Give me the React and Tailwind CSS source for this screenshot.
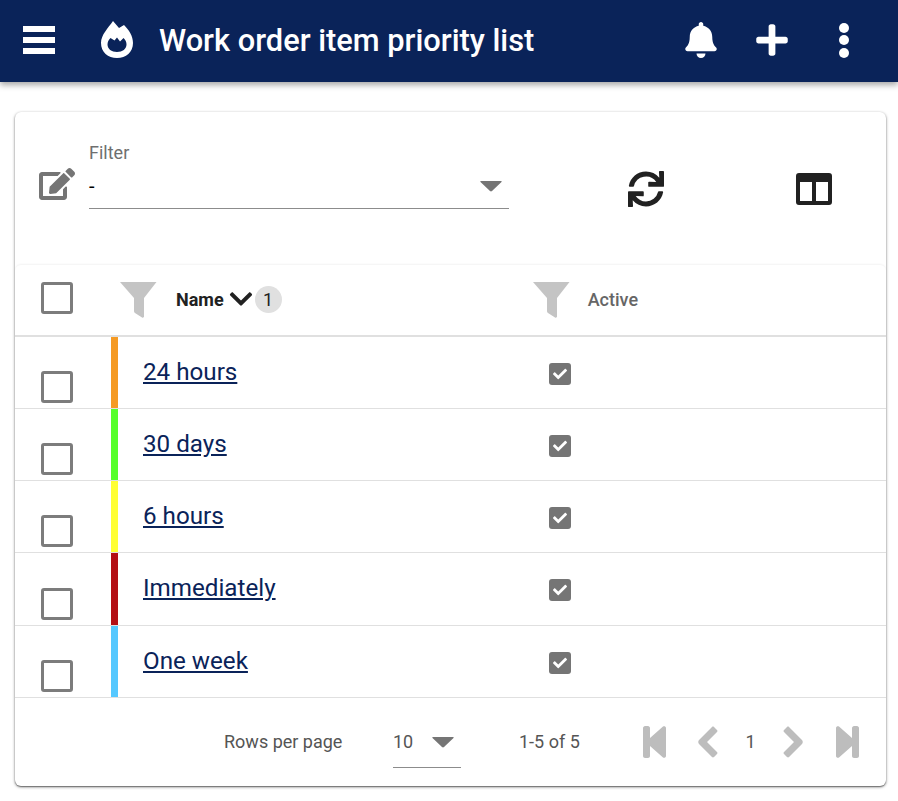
import { FaBell, FaPlus, FaEdit, FaSync, FaChevronDown, FaCheck } from "react-icons/fa";

const rows = [
  { name: "24 hours", color: "bg-[#f59a23]", height: "h-[72px]" },
  { name: "30 days", color: "bg-[#55ff2a]", height: "h-[72px]" },
  { name: "6 hours", color: "bg-[#ffff33]", height: "h-[72px]" },
  { name: "Immediately", color: "bg-[#b30f14]", height: "h-[73px]" },
  { name: "One week", color: "bg-[#55c8ff]", height: "h-[72px]" },
];

// Funnel drawn by hand, the icon packages only have symmetric ones
function Funnel() {
  return (
    <svg width="38" height="38" viewBox="0 0 38 38" className="text-[#c4c4c4]">
      <path d="M1 1h36.500L25 17v18.500c0 1-1 1.500-2 1l-7-4.500c-.6-.4-1-1-1-1.800V17z" fill="currentColor" />
    </svg>
  );
}

function Flame() {
  return (
    <svg width="34" height="38" viewBox="0 0 34 38">
      <path
        fillRule="evenodd"
        fill="#fff"
        d="M13 0l6 7 5-3c5 5 9 11 9 18 0 9-7 15-16 15S1 31 1 22C1 14 8 7 13 0zM10.500 17C8.500 19 7.500 21 7.500 23.500c0 4.500 4 7.500 9.500 7.500s9.500-3 9.500-7.500c0-2.500-1-4.500-3-6.500l-3.500 3.500-3-4-2.500 3z"
      />
    </svg>
  );
}

function Dropdown() {
  return (
    <svg width="22" height="12" viewBox="0 0 22 12">
      <path d="M1 1h20c.6 0 .8.500.5 1L12 11c-.5.500-1.500.500-2 0L.5 2C.2 1.500.4 1 1 1z" fill="#757575" />
    </svg>
  );
}

function Box({ className = "" }) {
  return <div className={`w-8 h-8 rounded-[3px] border-[3px] border-[#7c7c7c] bg-white ${className}`} />;
}

function PagerIcon({ d }) {
  return (
    <svg width="24" height="32" viewBox="0 0 24 32">
      <path d={d} fill="#bdbdbd" />
    </svg>
  );
}

export default function App() {
  return (
    <div className="w-[898px] h-[801px] bg-white overflow-hidden font-['Roboto',sans-serif]">
      {/* Top bar */}
      <header className="h-[82px] bg-[#0a2359] flex items-center shadow-[0_3px_6px_rgba(0,0,0,0.35)] relative z-10">
        <div className="ml-[23px] mb-[2px] w-8 flex flex-col gap-[5px]">
          <div className="h-[6px] bg-white" />
          <div className="h-[6px] bg-white" />
          <div className="h-[6px] bg-white" />
        </div>
        <div className="ml-[45px] mb-[2px]">
          <Flame />
        </div>
        <h1 className="ml-[25px] text-white text-[30.800px] font-medium leading-none">
          Work order item priority list
        </h1>
        <div className="ml-auto mb-[2px] flex items-center">
          <FaBell className="text-white" size={36} />
          <FaPlus className="text-white ml-[35px]" size={36} />
          <div className="ml-[49px] mr-[49px] flex flex-col gap-[2.500px]">
            <div className="w-[10px] h-[10px] rounded-full bg-white" />
            <div className="w-[10px] h-[10px] rounded-full bg-white" />
            <div className="w-[10px] h-[10px] rounded-full bg-white" />
          </div>
        </div>
      </header>

      {/* Card */}
      <main className="mx-[15px] mt-[30px] w-[871px] h-[674px] bg-white rounded-md shadow-[0_1px_3px_rgba(0,0,0,0.5),0_1px_1px_rgba(0,0,0,0.3)] flex flex-col">
        {/* Filter bar */}
        <div className="h-[153px] flex items-start">
          <FaEdit size={36} className="ml-[24px] mt-[54px] text-[#757575]" />
          <div className="ml-[14px] mt-[31px] w-[420px] h-[66px] border-b border-[#8c8c8c] flex flex-col">
            <span className="text-[18px] leading-[20px] text-[#6f6f6f]">Filter</span>
            <div className="flex items-center justify-between mt-[11px]">
              <span className="text-[20px] leading-[24px] text-black">-</span>
              <div className="mr-[7px]">
                <Dropdown />
              </div>
            </div>
          </div>
          <FaSync size={36} className="ml-[119px] mt-[59px] text-[#212121]" />
          <svg width="36" height="32" viewBox="0 0 36 32" className="ml-[132px] mt-[61px]">
            <path
              fillRule="evenodd"
              fill="#212121"
              d="M3 0h30a3 3 0 0 1 3 3v26a3 3 0 0 1-3 3H3a3 3 0 0 1-3-3V3a3 3 0 0 1 3-3zM4 9v19h12V9zm16 0v19h12V9z"
            />
          </svg>
        </div>

        {/* Table */}
        <div className="flex-1 flex flex-col rounded-t-md shadow-[0_-1px_2px_rgba(0,0,0,0.05)]">
          <div className="h-[72px] flex items-center border-b-2 border-[#e0e0e0]">
            <Box className="ml-[26px] mb-[4px]" />
            <div className="ml-[46px]">
              <Funnel />
            </div>
            <span className="ml-[19px] mb-[2px] text-[18px] font-bold text-[#212121]">Name</span>
            <FaChevronDown size={26} className="ml-[4px] mb-[2px] text-[#212121]" />
            <span className="ml-[1px] mb-[2px] w-[27px] h-[27px] rounded-full bg-[#e0e0e0] text-[18px] text-[#212121] flex items-center justify-center">
              1
            </span>
            <div className="ml-[250px]">
              <Funnel />
            </div>
            <span className="ml-[18px] mb-[2px] text-[18px] font-medium text-[#666666]">Active</span>
          </div>

          {rows.map((row) => (
            <div key={row.name} className={`${row.height} flex border-b border-[#e0e0e0]`}>
              <div className="w-[96px] flex items-end pb-[5px]">
                <Box className="ml-[26px]" />
              </div>
              <div className={`w-[7px] ${row.color}`} />
              <div className="w-[431px] pl-[25px] pt-[19px]">
                <a href="#" className="text-[24.200px] leading-[32px] text-[#0a2359] underline">
                  {row.name}
                </a>
              </div>
              <div className="pt-[26px]">
                <div className="w-[22px] h-[22px] rounded-[3px] bg-[#757575] flex items-center justify-center">
                  <FaCheck size={14} className="text-white" />
                </div>
              </div>
            </div>
          ))}

          {/* Pagination */}
          <div className="flex-1 flex items-center text-[#555555] text-[18px]">
            <span className="ml-[209px] mb-[2px] w-[118px] whitespace-nowrap">Rows per page</span>
            <div className="ml-[51px] w-[68px] h-[50px] mt-[2px] pb-[2px] border-b border-[#8c8c8c] flex items-center">
              <span>10</span>
              <div className="ml-[19px]">
                <Dropdown />
              </div>
            </div>
            <span className="ml-[58px] mb-[2px] w-[60px] whitespace-nowrap">1-5 of 5</span>
            <div className="ml-[64px]">
              <PagerIcon d="M2 0h3c1 0 2 1 2 2v10L20 .500c1-.800 3-.200 3 1.500v28c0 1.700-2 2.300-3 1.500L7 20v10c0 1-1 2-2 2H2c-1 0-2-1-2-2V2C0 1 1 0 2 0z" />
            </div>
            <div className="ml-[30px]">
              <PagerIcon d="M17 1l3 3c.6.600.6 1.500 0 2L10 16l10 10c.6.500.6 1.400 0 2l-3 3c-.6.600-1.500.600-2 0L2 18c-1-1-1-3 0-4L15 1c.5-.6 1.400-.6 2 0z" />
            </div>
            <span className="w-[59px] mb-[2px] text-center text-[#555555]">1</span>
            <div>
              <PagerIcon d="M7 1L4 4c-.6.600-.6 1.500 0 2l10 10L4 26c-.6.500-.6 1.400 0 2l3 3c.6.600 1.500.600 2 0l13-13c1-1 1-3 0-4L9 1C8.500.400 7.600.400 7 1z" />
            </div>
            <div className="ml-[31px]">
              <PagerIcon d="M22 0h-3c-1 0-2 1-2 2v10L4 .500C3-.300 1 .300 1 2v28c0 1.700 2 2.300 3 1.500L17 20v10c0 1 1 2 2 2h3c1 0 2-1 2-2V2c0-1-1-2-2-2z" />
            </div>
          </div>
        </div>
      </main>
    </div>
  );
}
